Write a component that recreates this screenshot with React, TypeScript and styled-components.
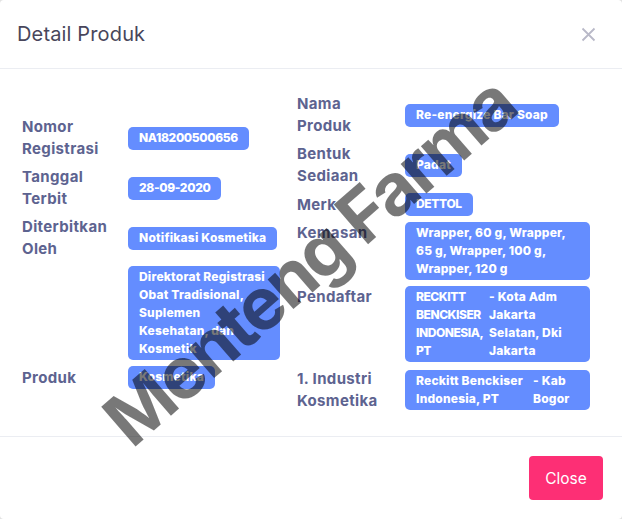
import React from 'react';
import styled, { createGlobalStyle } from 'styled-components';

const GlobalStyle = createGlobalStyle`
  html, body {
    margin: 0;
    padding: 0;
    background: #e2e2e2;
  }
  body {
    font-family: Inter, "Liberation Sans", sans-serif;
  }
`;

const Modal = styled.div`
  position: relative;
  width: 622px;
  height: 519px;
  display: flex;
  flex-direction: column;
  background: #fff;
  border-radius: 4px;
  overflow: hidden;
`;

const Header = styled.div`
  box-sizing: border-box;
  height: 69px;
  flex: none;
  display: flex;
  align-items: center;
  justify-content: space-between;
  padding: 0 26px 0 17px;
  border-bottom: 1px solid #ebedf2;
`;

const Heading = styled.h5`
  margin: 0;
  font-size: 20px;
  font-weight: 400;
  letter-spacing: 0.15px;
  color: #48465b;
`;

const CloseIcon = styled.button`
  display: flex;
  padding: 0;
  border: 0;
  background: none;
  color: #b9b9c8;
`;

const Body = styled.div`
  flex: 1;
  display: flex;
  align-items: center;
  padding: 0 0 0 22px;
`;

const Column = styled.div<{ $width: number }>`
  width: ${p => p.$width}px;
  flex: none;
  display: flex;
  flex-direction: column;
  gap: 6px;
`;

const Row = styled.div<{ $top?: boolean; $label: number }>`
  display: grid;
  grid-template-columns: ${p => p.$label}px auto;
  justify-content: start;
  align-items: ${p => (p.$top ? 'start' : 'center')};
`;

const Label = styled.div`
  font-size: 15px;
  line-height: 22px;
  font-weight: 700;
  letter-spacing: 0.35px;
  color: #5d6390;
`;

const Badge = styled.div<{ $width?: number; $tight?: boolean }>`
  box-sizing: border-box;
  min-height: 23px;
  width: ${p => (p.$width ? `${p.$width}px` : 'fit-content')};
  padding: 2px 11px;
  border-radius: 5px;
  background: #648dff;
  color: #fff;
  font-size: 12px;
  line-height: 18px;
  font-weight: 800;
  letter-spacing: ${p => (p.$tight ? '-0.35px' : '0.2px')};
  white-space: nowrap;
`;

const Split = styled.div<{ $first: number }>`
  display: grid;
  grid-template-columns: ${p => p.$first}px 1fr;
`;

const Caps = styled.div`
  letter-spacing: -0.45px;
`;

const Footer = styled.div`
  box-sizing: border-box;
  height: 83px;
  flex: none;
  display: flex;
  align-items: flex-start;
  justify-content: flex-end;
  padding: 19px 19px 0 0;
  border-top: 1px solid #ebedf2;
`;

const CloseButton = styled.button`
  width: 74px;
  height: 44px;
  border: 0;
  border-radius: 4px;
  background: #fd2f75;
  color: #fff;
  font-family: inherit;
  font-size: 15.5px;
  font-weight: 400;
`;

const Watermark = styled.div`
  position: absolute;
  left: 309px;
  top: 261px;
  white-space: nowrap;
  font-size: 72px;
  line-height: 1;
  font-weight: 700;
  letter-spacing: -2.8px;
  color: rgba(0, 0, 0, 0.53);
  pointer-events: none;
  transform: translate(-50%, -50%) rotate(-41deg);
`;

const LEFT = 106;
const RIGHT = 108;

export default function App() {
  return (
    <Modal>
      <GlobalStyle />
      <Header>
        <Heading>Detail Produk</Heading>
        <CloseIcon aria-label="Close">
          <svg width="15" height="15" viewBox="0 0 15 15" fill="none" stroke="currentColor" strokeWidth="1.8">
            <path d="M1.5 1.5 13.5 13.5M13.5 1.5 1.5 13.5" />
          </svg>
        </CloseIcon>
      </Header>
      <Body>
        <Column $width={275}>
          <Row $label={LEFT}>
            <Label>Nomor<br />Registrasi</Label>
            <Badge $tight>NA18200500656</Badge>
          </Row>
          <Row $label={LEFT}>
            <Label>Tanggal<br />Terbit</Label>
            <Badge $tight>28-09-2020</Badge>
          </Row>
          <Row $label={LEFT}>
            <Label>Diterbitkan<br />Oleh</Label>
            <Badge>Notifikasi Kosmetika</Badge>
          </Row>
          <Row $label={LEFT} $top>
            <Label />
            <Badge $width={152}>
              Direktorat Registrasi<br />Obat Tradisional,<br />Suplemen<br />Kesehatan, dan<br />Kosmetik
            </Badge>
          </Row>
          <Row $label={LEFT}>
            <Label>Produk</Label>
            <Badge>Kosmetika</Badge>
          </Row>
        </Column>
        <Column $width={293}>
          <Row $label={RIGHT}>
            <Label>Nama<br />Produk</Label>
            <Badge>Re-energize Bar Soap</Badge>
          </Row>
          <Row $label={RIGHT}>
            <Label>Bentuk<br />Sediaan</Label>
            <Badge>Padat</Badge>
          </Row>
          <Row $label={RIGHT}>
            <Label>Merk</Label>
            <Badge $tight>DETTOL</Badge>
          </Row>
          <Row $label={RIGHT} $top>
            <Label>Kemasan</Label>
            <Badge $width={185}>
              Wrapper, 60 g, Wrapper,<br />65 g, Wrapper, 100 g,<br />Wrapper, 120 g
            </Badge>
          </Row>
          <Row $label={RIGHT} $top>
            <Label>Pendaftar</Label>
            <Badge $width={185}>
              <Split $first={73}>
                <Caps>RECKITT<br />BENCKISER<br />INDONESIA,<br />PT</Caps>
                <div>- Kota Adm<br />Jakarta<br />Selatan, Dki<br />Jakarta</div>
              </Split>
            </Badge>
          </Row>
          <Row $label={RIGHT}>
            <Label>1. Industri<br />Kosmetika</Label>
            <Badge $width={185}>
              <Split $first={117}>
                <div>Reckitt Benckiser<br />Indonesia, PT</div>
                <div>- Kab<br />Bogor</div>
              </Split>
            </Badge>
          </Row>
        </Column>
      </Body>
      <Footer>
        <CloseButton>Close</CloseButton>
      </Footer>
      <Watermark>Menteng Farma</Watermark>
    </Modal>
  );
}
